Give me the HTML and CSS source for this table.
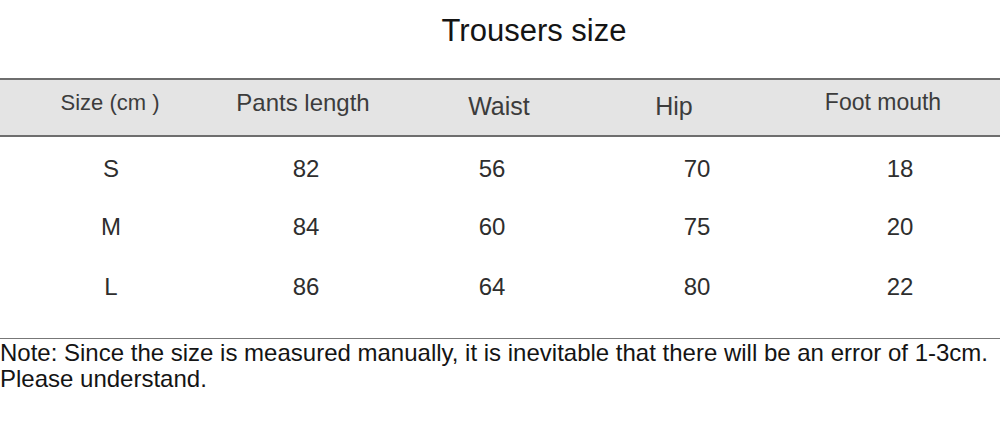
FILE: index.html
```html
<!DOCTYPE html>
<html lang="en">
<head>
<meta charset="utf-8">
<title>Trousers size</title>
<link rel="stylesheet" href="styles.css">
</head>
<body>
<div class="page">
  <h1 class="title">Trousers size</h1>
  <div class="head-row">
    <div class="hcell">Size (cm )</div>
    <div class="hcell hcell-lg">Pants length</div>
    <div class="hcell hcell-low">Waist</div>
    <div class="hcell hcell-low">Hip</div>
    <div class="hcell hcell-high hcell-foot">Foot mouth</div>
  </div>
  <div class="body">
    <div class="row"><div class="cell">S</div><div class="cell">82</div><div class="cell">56</div><div class="cell">70</div><div class="cell">18</div></div>
    <div class="row"><div class="cell">M</div><div class="cell">84</div><div class="cell">60</div><div class="cell">75</div><div class="cell">20</div></div>
    <div class="row"><div class="cell">L</div><div class="cell">86</div><div class="cell">64</div><div class="cell">80</div><div class="cell">22</div></div>
  </div>
  <p class="note">Note: Since the size is measured manually, it is inevitable that there will be an error of 1-3cm.<br>Please understand.</p>
</div>
</body>
</html>
```
FILE: styles.css
```css
html, body {
  margin: 0;
  padding: 0;
  background: #ffffff;
}
body {
  font-family: "Liberation Sans", Arial, sans-serif;
  color: #333333;
}
.page {
  width: 1000px;
  height: 426px;
  overflow: hidden;
}
.title {
  margin: 0;
  height: 78px;
  box-sizing: border-box;
  padding: 13px 0 0 68px;
  text-align: center;
  font-size: 31px;
  font-weight: normal;
  line-height: 36px;
  color: #141414;
}
.head-row {
  display: grid;
  grid-template-columns: 220px 166px 226px 124px 1fr;
  align-items: center;
  height: 59px;
  box-sizing: border-box;
  padding-bottom: 10px;
  background: #e4e4e4;
  border-top: 2px solid #6e6e6e;
  border-bottom: 2px solid #6e6e6e;
}
.hcell {
  text-align: center;
  font-size: 22px;
  color: #3c3c3c;
  line-height: 26px;
}
.hcell-lg {
  font-size: 24px;
}
.hcell-low {
  font-size: 25px;
  padding-top: 7px;
}
.hcell-high {
  padding-bottom: 2px;
}
.hcell-foot {
  font-size: 23px;
  padding-left: 30px;
}
.body {
  padding: 3px 0 22px;
  border-bottom: 1px solid #777777;
}
.row {
  display: grid;
  grid-template-columns: 222px 168px 204px 206px 200px;
  align-items: center;
  height: 58px;
}
.row:last-child {
  padding-top: 2px;
}
.cell {
  text-align: center;
  font-size: 24px;
  color: #2e2e2e;
}
.note {
  margin: 0;
  padding-top: 1px;
  font-size: 24px;
  line-height: 26px;
  color: #141414;
  white-space: nowrap;
}
```
